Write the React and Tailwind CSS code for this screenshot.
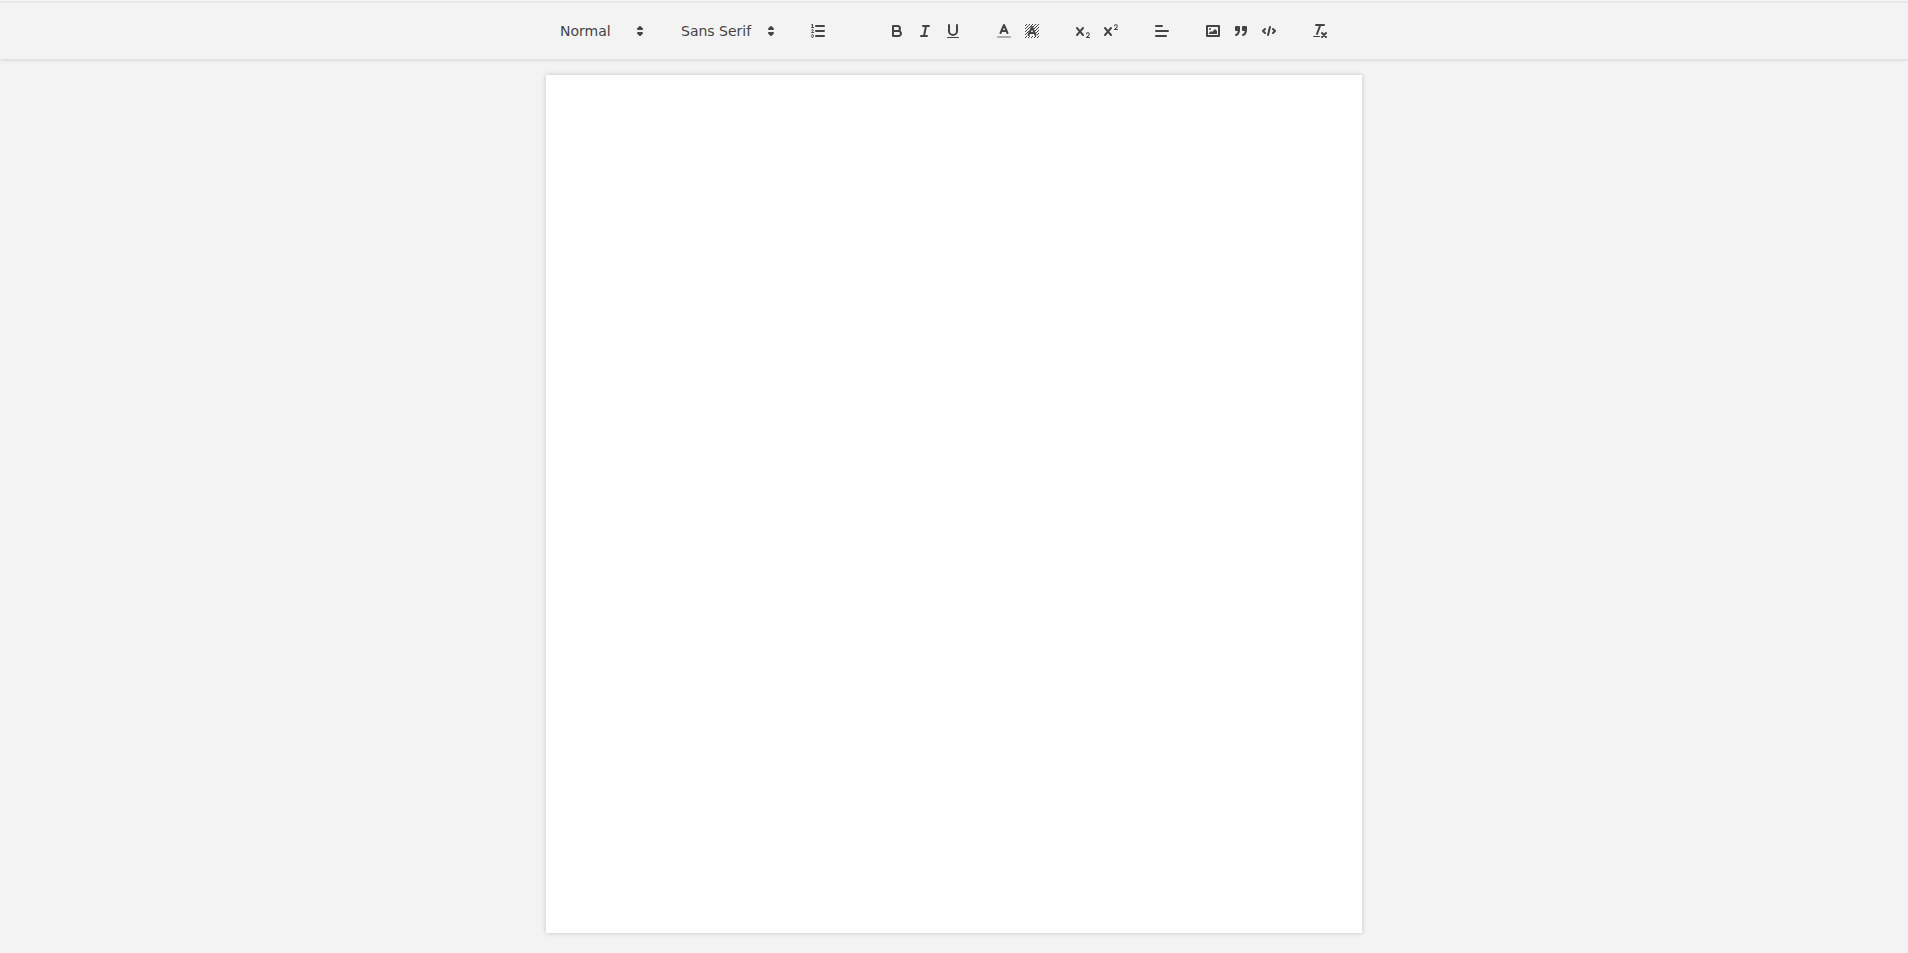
import React from 'react';

const FONTS = ['Sans Serif', 'Serif', 'Monospace'];
const HEADINGS = ['Normal', 'Heading 1', 'Heading 2', 'Heading 3'];

// diagonal hatch cells on the 18px grid, leaving room for the letter
const hatch = [];
for (let y = 2; y < 16; y++) {
    for (let x = 2; x < 16; x++) {
        const half = Math.max(0, y - 5) * 0.44 + 1.4;
        const underLetter = y > 3 && y < 14 && Math.abs(x + 0.5 - 9) < half;
        if ((x + y) % 3 === 2 && !underLetter) hatch.push([x, y]);
    }
}

const Icon = ({ children }) => (
    <svg viewBox="0 0 18 18" className="w-[18px] h-[18px] fill-none stroke-[#444] stroke-2" strokeLinecap="round" strokeLinejoin="round" aria-hidden="true">
        {children}
    </svg>
);

const Two = () => (
    <path className="fill-[#444] stroke-none" d="M15.5,15H13.861a3.858,3.858,0,0,0,1.914-2.975,1.8,1.8,0,0,0-1.6-1.751A1.921,1.921,0,0,0,12.021,11.7a0.5,0.5,0,1,0,.957.291h0a0.914,0.914,0,0,1,1.053-.725,0.81,0.81,0,0,1,.744.762c0,1.076-1.17,1.87-1.94,2.431A1.456,1.456,0,0,0,12,15.5a0.5,0.5,0,0,0,.5.5h3A0.5,0.5,0,0,0,15.5,15Z" />
);

const Cross = () => (
    <path className="fill-[#444] stroke-none" d="M9.65,5.241a1,1,0,0,0-1.409.108L6,7.964,3.759,5.349A1,1,0,0,0,2.192,6.592Q2.215,6.621,2.241,6.649L4.684,9.5,2.241,12.35A1,1,0,0,0,3.71,13.707q0.026-.028.049-0.057L6,11.036,8.241,13.65a1,1,0,1,0,1.567-1.243Q9.785,12.378,9.759,12.35L7.316,9.5,9.759,6.651A1,1,0,0,0,9.65,5.241Z" />
);

const icons = {
    ordered: (
        <>
            <path d="M7 4H15M7 9H15M7 14H15" />
            <path className="stroke-1" d="M2.5 5.5H4.5" />
            <path className="fill-[#444] stroke-none" d="M3.5,6A0.5,0.5,0,0,1,3,5.5V3.085l-0.276.138A0.5,0.5,0,0,1,2.053,3c-0.124-.247-0.023-0.324.224-0.447l1-.5A0.5,0.5,0,0,1,4,2.5v3A0.5,0.5,0,0,1,3.5,6Z" />
            <path className="stroke-1" d="M4.5,10.5h-2c0-.234,1.85-1.076,1.85-2.234A0.959,0.959,0,0,0,2.5,8.156" />
            <path className="stroke-1" d="M2.5,14.846a0.959,0.959,0,0,0,1.85-.109A0.7,0.7,0,0,0,3.75,14a0.688,0.688,0,0,0,.6-0.736,0.959,0.959,0,0,0-1.85-.109" />
        </>
    ),
    bold: (
        <>
            <path d="M5,4H9.5A2.5,2.5,0,0,1,12,6.5v0A2.5,2.5,0,0,1,9.5,9H5V4Z" />
            <path d="M5,9h5.5A2.5,2.5,0,0,1,13,11.5v0A2.5,2.5,0,0,1,10.5,14H5V9Z" />
        </>
    ),
    italic: <path d="M7 4H13M5 14H11M8 14L10 4" />,
    underline: (
        <>
            <path d="M5,3V9a4.012,4.012,0,0,0,4,4H9a4.012,4.012,0,0,0,4-4V3" />
            <rect className="fill-[#444] stroke-none" x="3" y="15" width="12" height="1" rx="0.5" />
        </>
    ),
    color: (
        <>
            <path className="opacity-40" d="M3 15H15" />
            <path d="M5.5 11L9 3L12.5 11M6.38 9H11.63" />
        </>
    ),
    background: (
        <>
            <g className="fill-[#444] stroke-none">
                {hatch.map(([x, y]) => (
                    <rect key={`${x}-${y}`} x={x} y={y} width="1" height="1" />
                ))}
            </g>
            <path d="M5.5 13L9 5L12.5 13M6.38 11H11.63" />
        </>
    ),
    sub: (
        <>
            <Two />
            <Cross />
        </>
    ),
    super: (
        <>
            <g transform="translate(0 -8)">
                <Two />
            </g>
            <Cross />
        </>
    ),
    align: <path d="M3 9H15M3 14H13M3 4H9" />,
    image: (
        <>
            <rect x="3" y="4" width="12" height="10" />
            <circle className="fill-[#444] stroke-none" cx="6" cy="7" r="1" />
            <path className="fill-[#444] stroke-none" d="M5 12V11L7 9L8 10L11 7L13 9V12Z" />
        </>
    ),
    quote: (
        <>
            <rect className="fill-[#444]" x="4" y="5" width="3" height="3" />
            <rect className="fill-[#444]" x="11" y="5" width="3" height="3" />
            <path className="fill-[#444]" d="M7,8c0,4.031-3,5-3,5M14,8c0,4.031-3,5-3,5" />
        </>
    ),
    code: <path d="M5 7L3 9L5 11M13 7L15 9L13 11M10 5L8 13" />,
    clean: (
        <>
            <path d="M5 3H13M6 12L9.35 3M11 11L15 15M15 11L11 15" />
            <rect className="fill-[#444] stroke-none" x="2" y="14" width="7" height="1" rx="0.5" />
        </>
    ),
};

// null keeps an empty slot in the group
const groups = [
    [['ordered', 'Ordered list'], null],
    [['bold', 'Bold'], ['italic', 'Italic'], ['underline', 'Underline']],
    [['color', 'Text color'], ['background', 'Background color']],
    [['sub', 'Subscript'], ['super', 'Superscript']],
    [['align', 'Align']],
    [['image', 'Insert image'], ['quote', 'Blockquote'], ['code', 'Code block']],
    [['clean', 'Clear formatting']],
];

const Picker = ({ label, options, className }) => (
    <div className={`relative h-6 ${className}`}>
        <select aria-label={label} className="appearance-none w-full h-6 pl-2 bg-transparent text-sm font-medium text-[#444] cursor-pointer outline-none">
            {options.map((option) => (
                <option key={option}>{option}</option>
            ))}
        </select>
        <div className="absolute right-px top-[3px] pointer-events-none">
            <Icon>
                <path d="M7 11L9 13L11 11ZM7 7L9 5L11 7Z" />
            </Icon>
        </div>
    </div>
);

const App = () => {
    return (
        <div className="min-h-screen flex flex-col bg-[#f3f3f3] font-['DejaVu_Sans',sans-serif]">
            <header className="sticky top-0 z-10 bg-[#f3f3f3] shadow-[0_0_5px_rgba(0,0,0,0.2)]">
                <div className="mt-px h-0.5 bg-[#e8e8e8]" />
                <div role="toolbar" aria-label="Formatting" className="flex flex-wrap justify-center gap-[23px] pt-4 pb-4 pr-[22px]">
                    <Picker label="Heading" options={HEADINGS} className="w-[98px]" />
                    <Picker label="Font" options={FONTS} className="w-[108px]" />
                    {groups.map((group, i) => (
                        <div key={i} className="flex">
                            {group.map((item, j) =>
                                item ? (
                                    <button key={item[0]} type="button" aria-label={item[1]} className="w-7 h-6 px-[5px] py-[3px] cursor-pointer">
                                        <Icon>{icons[item[0]]}</Icon>
                                    </button>
                                ) : (
                                    <span key={j} className="w-7 h-6" />
                                )
                            )}
                        </div>
                    ))}
                </div>
            </header>

            <main className="flex-1 flex justify-center mt-4 mb-5">
                <div
                    role="textbox"
                    aria-label="Document"
                    aria-multiline="true"
                    contentEditable
                    suppressContentEditableWarning
                    className="w-full max-w-[816px] p-24 bg-white shadow-[0_0_5px_rgba(0,0,0,0.2)] outline-none"
                />
            </main>
        </div>
    );
};

export default App;
